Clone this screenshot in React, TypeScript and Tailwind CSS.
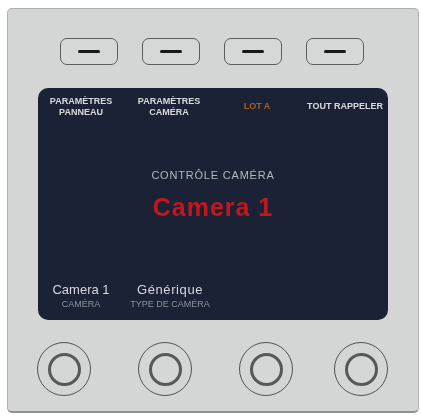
const BUTTONS = [0, 1, 2, 3];

const KNOB_MARGINS = ["ml-0", "ml-[47px]", "ml-[47px]", "ml-[41px]"];

function Knob({ className }: { className: string }) {
  return (
    <div
      className={`flex h-[54px] w-[54px] items-center justify-center rounded-full border border-[#4f5354] ${className}`}
    >
      <div className="h-[33px] w-[33px] rounded-full border-[3px] border-[#55595a] bg-[#d4d7d6]" />
    </div>
  );
}

export default function App() {
  return (
    <div className="h-[415px] w-[421px] bg-white pl-[7px] pt-[8px] font-['Liberation_Sans',Arial,sans-serif]">
      <div className="h-[405px] w-[412px] rounded-[5px] border border-[#aeb0af] border-b-2 border-b-[#8f9190] bg-[#d3d6d5] pt-[29px] blur-[0.5px]">
        {/* Top soft keys */}
        <div className="ml-[52px] flex gap-[24px]">
          {BUTTONS.map((i) => (
            <div
              key={i}
              className="flex h-[27px] w-[58px] items-center justify-center rounded-[7px] border border-[#5a5d5d] bg-[#d5d8d7]"
            >
              <span className="block h-[3px] w-[22px] rounded-full bg-[#17181a]" />
            </div>
          ))}
        </div>

        {/* LCD */}
        <div className="ml-[30px] mt-[23px] flex h-[232px] w-[350px] flex-col rounded-[10px] bg-[#1c2235] text-center">
          <div className="flex h-[40px] items-start pt-[8px] text-[9px] font-bold leading-[11px]">
            <div className="ml-[11px] w-[64px] text-[#d9dadd]">
              PARAMÈTRES
              <br />
              PANNEAU
            </div>
            <div className="ml-[24px] w-[64px] text-[#d9dadd]">
              PARAMÈTRES
              <br />
              CAMÉRA
            </div>
            <div className="ml-[36px] mt-[5px] w-[40px] text-[#a85f2e]">LOT A</div>
            <div className="ml-[29px] mt-[5px] w-[78px] whitespace-nowrap text-[#d9dadd]">
              TOUT RAPPELER
            </div>
          </div>

          <div className="mt-[41px] text-[11px] leading-[12px] tracking-[0.8px] text-[#b4b7bf]">
            CONTRÔLE CAMÉRA
          </div>
          <div className="mt-[12px] text-[25px] font-bold leading-[28px] tracking-[1px] text-[#c3161d]">
            Camera 1
          </div>

          <div className="mt-auto flex pb-[9px] text-[#d6d8dc]">
            <div className="ml-[12px] w-[62px]">
              <div className="text-[13px] leading-[16px]">Camera 1</div>
              <div className="text-[9px] leading-[13px] text-[#8e919c]">CAMÉRA</div>
            </div>
            <div className="ml-[16px] w-[84px]">
              <div className="text-[13px] leading-[16px] tracking-[0.6px]">Générique</div>
              <div className="whitespace-nowrap text-[9px] leading-[13px] text-[#8e919c]">
                TYPE DE CAMÉRA
              </div>
            </div>
          </div>
        </div>

        {/* Rotary knobs */}
        <div className="ml-[29px] mt-[22px] flex">
          {KNOB_MARGINS.map((m, i) => (
            <Knob key={i} className={m} />
          ))}
        </div>
      </div>
    </div>
  );
}
